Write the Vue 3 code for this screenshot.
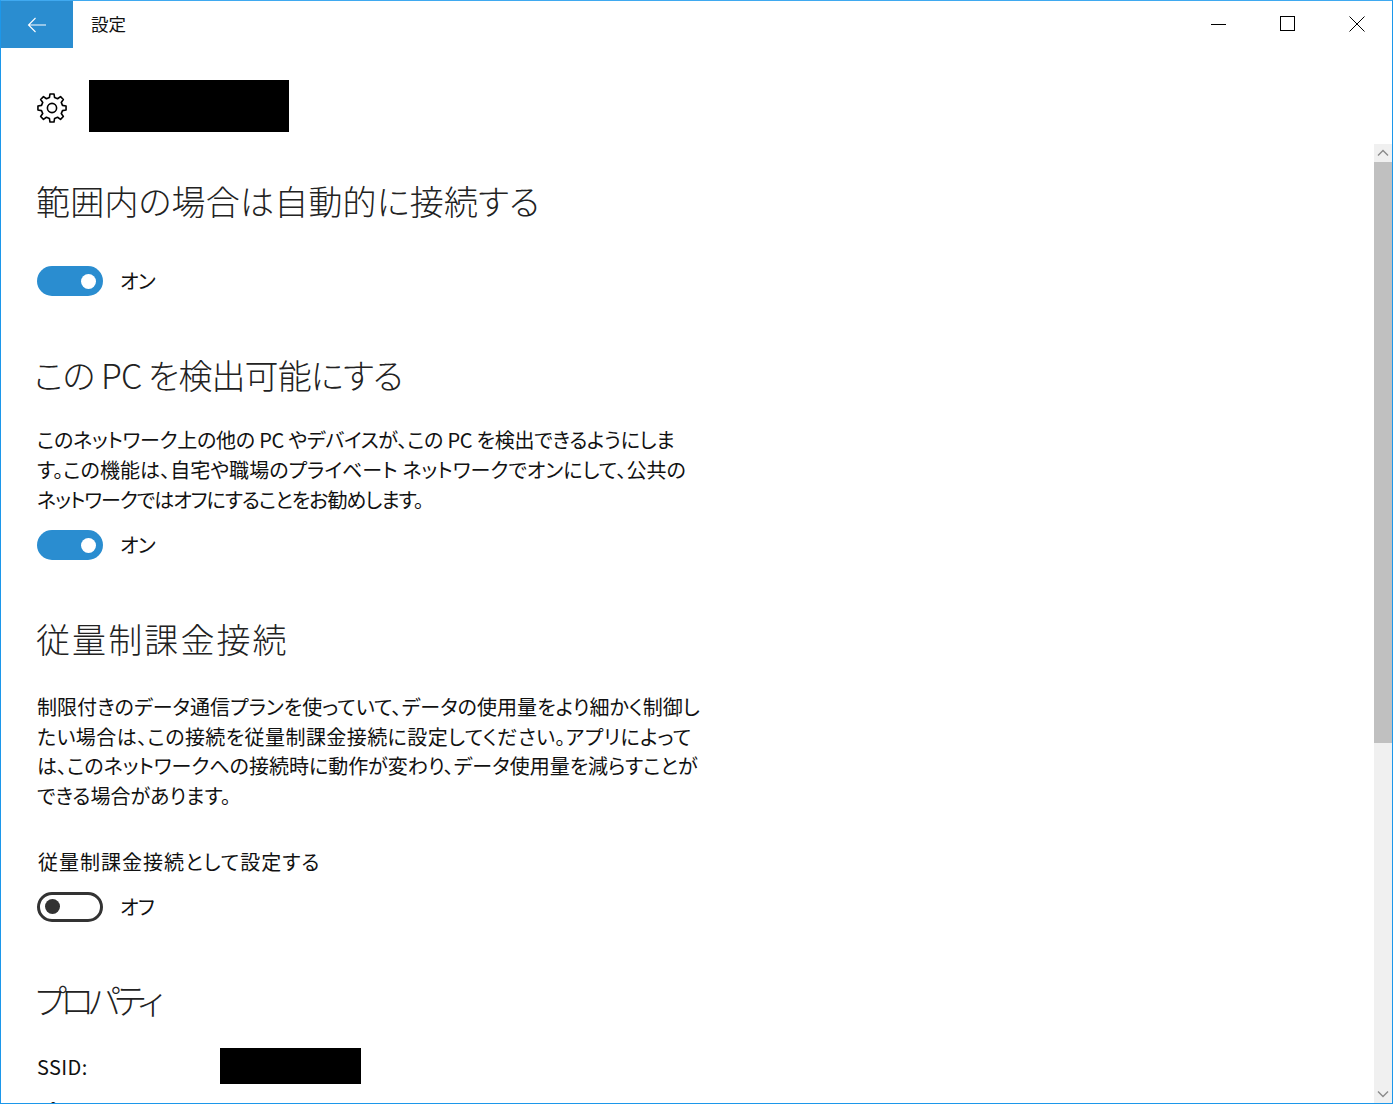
<script setup>
const cx = 15, cy = 15, teeth = 8
let d = ''
for (let i = 0; i < teeth; i++) {
  const a = (i / teeth) * Math.PI * 2 - Math.PI / 2
  const w = Math.PI / teeth
  const pts = [
    [10.8, a - w * 0.62],
    [14.2, a - w * 0.36],
    [14.2, a + w * 0.36],
    [10.8, a + w * 0.62]
  ]
  pts.forEach(([r, t], j) => {
    const x = (cx + r * Math.cos(t)).toFixed(2)
    const y = (cy + r * Math.sin(t)).toFixed(2)
    d += (i === 0 && j === 0 ? 'M' : 'L') + x + ' ' + y + ' '
  })
}
d += 'Z'
const gearPath = d
</script>

<template>
  <div class="window">
    <header class="titlebar">
      <button class="back" aria-label="戻る">
        <svg width="20" height="16" viewBox="0 0 20 16" fill="none" stroke="#fff" stroke-width="1.1">
          <path d="M19 8H1.5M8.5 1L1.5 8l7 7" />
        </svg>
      </button>
      <span class="app-title">設定</span>
      <div class="controls">
        <span class="ctl">
          <svg width="16" height="16" viewBox="0 0 16 16"><path d="M0 8.5h15" stroke="#000" stroke-width="1" /></svg>
        </span>
        <span class="ctl">
          <svg width="16" height="16" viewBox="0 0 16 16" fill="none"><rect x="0.5" y="0.5" width="14" height="14" stroke="#000" stroke-width="1" /></svg>
        </span>
        <span class="ctl">
          <svg width="16" height="16" viewBox="0 0 16 16" fill="none"><path d="M0.5 0.5l15 15M15.5 0.5l-15 15" stroke="#000" stroke-width="1" /></svg>
        </span>
      </div>
    </header>

    <div class="body">
      <main class="content">
        <div class="page-head">
          <svg class="gear" width="30" height="30" viewBox="0 0 30 30" fill="none" stroke="#000" stroke-width="1.6" stroke-linejoin="round">
            <path :d="gearPath" />
            <circle cx="15" cy="15" r="4.6" />
          </svg>
          <div class="redact-title"></div>
        </div>

        <h2 class="heading h-first">範囲内の場合は自動的に接続する</h2>
        <div class="toggle-row t-first">
          <span class="toggle on"><i></i></span>
          <span class="toggle-label">オン</span>
        </div>

        <h2 class="heading h-next h-discover">この PC を検出可能にする</h2>
        <p class="para p-second">
          <span class="line l-a">このネットワーク上の他の PC やデバイスが、この PC を検出できるようにしま</span>
          <span class="line l-b">す。この機能は、自宅や職場のプライベート ネットワークでオンにして、公共の</span>
          <span class="line l-c">ネットワークではオフにすることをお勧めします。</span>
        </p>
        <div class="toggle-row t-second">
          <span class="toggle on"><i></i></span>
          <span class="toggle-label">オン</span>
        </div>

        <h2 class="heading h-next h-metered">従量制課金接続</h2>
        <p class="para p-third">
          <span class="line l-d">制限付きのデータ通信プランを使っていて、データの使用量をより細かく制御し</span>
          <span class="line l-e">たい場合は、この接続を従量制課金接続に設定してください。アプリによって</span>
          <span class="line">は、このネットワークへの接続時に動作が変わり、データ使用量を減らすことが</span>
          <span class="line">できる場合があります。</span>
        </p>
        <div class="field-label">従量制課金接続として設定する</div>
        <div class="toggle-row t-third">
          <span class="toggle off"><i></i></span>
          <span class="toggle-label">オフ</span>
        </div>

        <h2 class="heading h-props">プロパティ</h2>
        <dl class="props">
          <dt>SSID:</dt>
          <dd><span class="redact-value"></span></dd>
          <dt>プロトコル:</dt>
          <dd></dd>
        </dl>
      </main>

      <aside class="scrollbar">
        <div class="arrow">
          <svg width="12" height="8" viewBox="0 0 12 8" fill="none" stroke="#8a8a8a" stroke-width="1.4"><path d="M1 6.5l5-5 5 5" /></svg>
        </div>
        <div class="track"><div class="thumb"></div></div>
        <div class="arrow">
          <svg width="12" height="8" viewBox="0 0 12 8" fill="none" stroke="#8a8a8a" stroke-width="1.4"><path d="M1 1.5l5 5 5-5" /></svg>
        </div>
      </aside>
    </div>
  </div>
</template>

<style>
html, body { margin: 0; background: #fff; }
</style>

<style scoped>
.window {
  box-sizing: border-box;
  width: 1393px;
  height: 1104px;
  display: flex;
  flex-direction: column;
  overflow: hidden;
  background: #fff;
  border: 1px solid #1c97ea;
  border-top-color: #3fa9f0;
  font-family: "Noto Sans CJK JP", "Noto Sans", sans-serif;
  font-feature-settings: "palt";
  color: #000;
}
.titlebar {
  flex: none;
  height: 47px;
  display: flex;
  align-items: center;
}
.back {
  width: 72px;
  height: 47px;
  border: 0;
  padding: 0;
  background: #2a8dd0;
  display: flex;
  align-items: center;
  justify-content: center;
}
.app-title {
  margin-left: 18px;
  margin-top: -2px;
  font-size: 17.5px;
  line-height: 47px;
  color: #111;
}
.controls {
  margin-left: auto;
  margin-right: 1px;
  display: flex;
}
.ctl {
  width: 69px;
  height: 47px;
  padding-bottom: 1px;
  box-sizing: border-box;
  display: flex;
  align-items: center;
  justify-content: center;
}
.body {
  flex: 1;
  min-height: 0;
  display: flex;
}
.content {
  flex: 1;
  min-width: 0;
  overflow: hidden;
  padding: 32px 0 0 36px;
}
.page-head {
  display: flex;
  align-items: center;
  height: 52px;
}
.gear { margin-top: 3px; flex: none; }
.redact-title {
  width: 200px;
  height: 52px;
  margin-left: 22px;
  background: #000;
}
.heading {
  margin: 0 0 0 -1px;
  font-size: 34px;
  font-weight: 300;
  line-height: 46px;
  letter-spacing: 0.2px;
  color: #222;
}
.h-discover { margin-left: -3px; letter-spacing: -0.9px; }
.h-metered { letter-spacing: 2.1px; }
.h-first { margin-top: 46px; }
.h-next { margin-top: 56px; }
.h-props { margin-top: 55px; margin-left: -2px; letter-spacing: -5.6px; }
.toggle-row {
  display: flex;
  align-items: center;
  height: 30px;
}
.t-first { margin-top: 42px; }
.t-second { margin-top: 15px; }
.t-third { margin-top: 15px; }
.toggle {
  box-sizing: border-box;
  width: 66px;
  height: 30px;
  border-radius: 15px;
  display: flex;
  align-items: center;
}
.toggle i {
  width: 15px;
  height: 15px;
  border-radius: 50%;
  display: block;
}
.toggle.on {
  background: #2a8dd0;
  justify-content: flex-end;
  padding-right: 7px;
}
.toggle.on i { background: #fff; }
.toggle.off {
  border: 3px solid #333;
  padding-left: 5px;
}
.toggle.off i { background: #333; }
.toggle-label {
  margin-left: 17px;
  font-size: 20px;
  line-height: 30px;
  letter-spacing: -0.5px;
  color: #111;
}
.para {
  margin: 0;
  width: 680px;
  font-size: 20px;
  white-space: nowrap;
  color: #111;
}
.line { display: block; }
.p-second { margin-top: 27px; line-height: 30px; }
.p-third { margin-top: 30px; line-height: 29.7px; }
.l-a { letter-spacing: -0.25px; }
.l-b { letter-spacing: 0.06px; }
.l-c { letter-spacing: -1px; }
.l-d { letter-spacing: 0.05px; }
.l-e { letter-spacing: 0.42px; }
.field-label {
  margin-top: 36px;
  margin-left: 1px;
  font-size: 20px;
  line-height: 30px;
  letter-spacing: 1px;
  color: #111;
}
.props {
  margin: 25px 0 0;
  display: grid;
  grid-template-columns: 183px 141px;
  grid-auto-rows: 36px;
  row-gap: 8px;
  align-items: center;
  font-size: 20px;
  color: #111;
}
.props dt, .props dd { margin: 0; line-height: 36px; }
.props dt { padding-top: 2px; letter-spacing: 0.4px; }
.redact-value {
  display: block;
  width: 141px;
  height: 36px;
  background: #000;
}
.scrollbar {
  flex: none;
  width: 18px;
  margin-top: 96px;
  display: flex;
  flex-direction: column;
  background: #f0f0f0;
}
.arrow {
  flex: none;
  height: 18px;
  display: flex;
  align-items: center;
  justify-content: center;
}
.track { flex: 1; }
.thumb {
  height: 581px;
  background: #c0c0c0;
}
</style>
